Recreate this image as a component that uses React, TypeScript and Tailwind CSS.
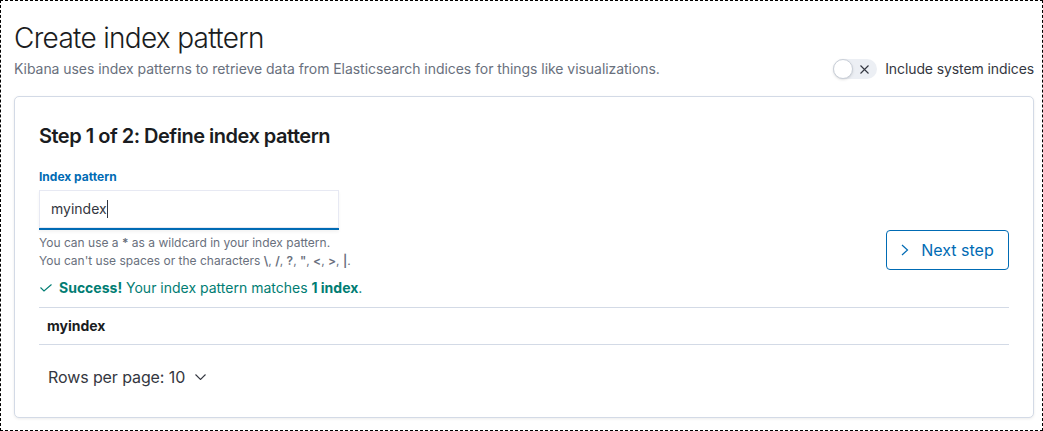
import { useState } from 'react';

const IndexPatternPage = () => {
    const [pattern] = useState('myindex');
    const [includeSystem] = useState(false);

    return (
        <div className="w-[1043px] h-[431px] border border-dashed border-black pl-[13px] pr-[8px] pt-[19px] font-['Inter',sans-serif] text-[#343741] bg-white">
            {/* page header */}
            <div className="flex justify-between items-end">
                <div>
                    <h1 className="text-[28px] leading-9 font-light tracking-[-0.025em] text-[#1a1c21]">Create index pattern</h1>
                    <p className="mt-[3px] text-sm leading-5 tracking-[-0.05px] text-[#69707d]">
                        Kibana uses index patterns to retrieve data from Elasticsearch indices for things like visualizations.
                    </p>
                </div>
                <div className="flex items-center gap-2 h-5">
                    <div className={`relative w-[44px] h-5 rounded-full ${includeSystem ? 'bg-[#006bb4]' : 'bg-[#eceff4]'}`}>
                        <div className="absolute left-0 top-0 w-5 h-5 rounded-full bg-white border border-[#c9cfd8] shadow-sm" />
                        <svg className="absolute left-[27px] top-[6px]" width="9" height="9" viewBox="0 0 9 9" fill="none">
                            <path d="M0.5 0.5L8.5 8.5M8.5 0.5L0.5 8.5" stroke="#343741" strokeWidth="1.1" />
                        </svg>
                    </div>
                    <span className="text-sm leading-5 tracking-[-0.1px] text-[#343741]">Include system indices</span>
                </div>
            </div>

            {/* step panel */}
            <div className="mt-[17px] border border-[#d3dae6] rounded-[5px] bg-white shadow-[0_1px_3px_rgba(0,0,0,0.08)] px-6 pt-[27px] pb-[30px]">
                <h2 className="text-[20px] leading-6 font-semibold tracking-[-0.025em] text-[#1a1c21]">Step 1 of 2: Define index pattern</h2>

                <div className="flex justify-between items-end">
                    <div>
                        <label className="block mt-5 mb-1 text-xs leading-[18px] font-bold text-[#006bb4]">Index pattern</label>
                        <div className="w-[300px] h-10 bg-white shadow-[inset_0_0_0_1px_rgba(17,43,134,0.1),0_2px_3px_rgba(0,0,0,0.05)] border-b-2 border-[#006bb4] px-3 flex items-center text-sm text-[#343741]">
                            {pattern}
                            <span className="inline-block w-px h-[18px] bg-[#343741]" />
                        </div>
                        <div className="mt-1 text-xs leading-[18px] text-[#69707d]">
                            <p>You can use a <b className="font-semibold">*</b> as a wildcard in your index pattern.</p>
                            <p>
                                You can't use spaces or the characters <b className="font-semibold">\</b>, <b className="font-semibold">/</b>, <b className="font-semibold">?</b>, <b className="font-semibold">"</b>, <b className="font-semibold">&lt;</b>, <b className="font-semibold">&gt;</b>, <b className="font-semibold">|</b>.
                            </p>
                        </div>
                    </div>
                    <button className="w-[123px] h-10 border border-[#006bb4] rounded-[4px] flex items-center justify-center gap-3 text-base text-[#006bb4]">
                        <svg width="8" height="12" viewBox="0 0 8 12" fill="none">
                            <path d="M1 1L6.5 6L1 11" stroke="#006bb4" strokeWidth="1.2" />
                        </svg>
                        Next step
                    </button>
                </div>

                <div className="mt-2 flex items-center gap-[7px] text-sm leading-5 text-[#017d73]">
                    <svg width="12" height="8" viewBox="0 0 12 8" fill="none" className="ml-px">
                        <path d="M0.5 3.5L4 7L11.5 0.5" stroke="#017d73" strokeWidth="1.1" />
                    </svg>
                    <span><b className="font-bold">Success!</b> Your index pattern matches <b className="font-bold">1 index</b>.</span>
                </div>

                <div className="mt-[9px] border-t border-b border-[#d3dae6] py-2 px-2 text-sm leading-5 font-bold text-[#1a1c21]">
                    myindex
                </div>

                <div className="mt-[22px] pl-[9px] flex items-center gap-[10px] text-base leading-5 tracking-[-0.1px] text-[#343741]">
                    Rows per page: 10
                    <svg width="11" height="6" viewBox="0 0 11 6" fill="none">
                        <path d="M0.5 0.5L5.5 5.5L10.5 0.5" stroke="#343741" strokeWidth="1.1" />
                    </svg>
                </div>
            </div>
        </div>
    );
};

export default function App() {
    return <IndexPatternPage />;
}
